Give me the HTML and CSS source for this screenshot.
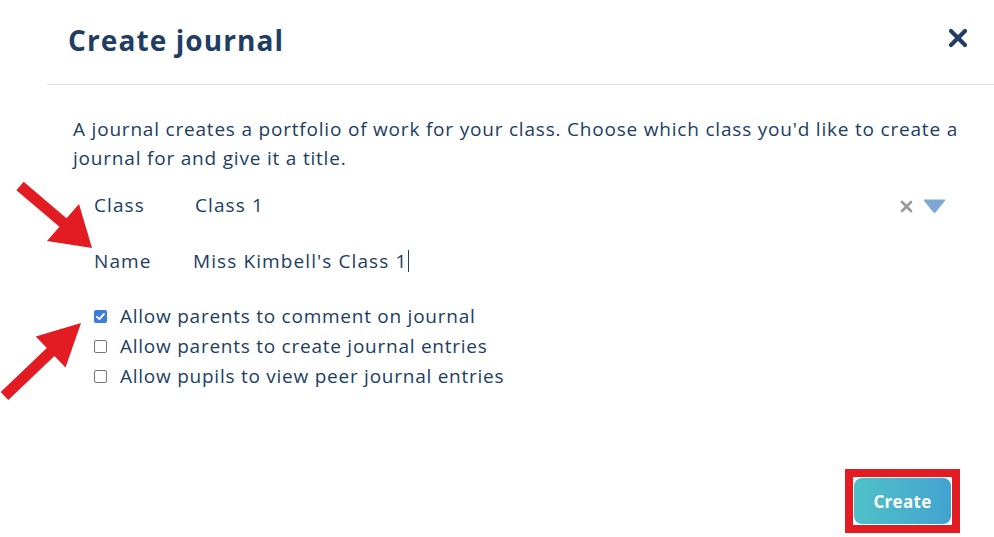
FILE: index.html
```html
<!DOCTYPE html>
<html lang="en">
<head>
    <meta charset="UTF-8">
    <meta name="viewport" content="width=device-width, initial-scale=1.0">
    <title>Create journal</title>
    <link rel="stylesheet" href="styles.css">
</head>
<body>
    <div class="modal">
        <!-- Header -->
        <div class="modal-header">
            <h2>Create journal</h2>
            <svg class="close" width="20" height="20" viewBox="0 0 20 20">
                <path d="M3 3 L17 17 M17 3 L3 17" stroke="#213d63" stroke-width="4.2" stroke-linecap="round"/>
            </svg>
        </div>

        <!-- Body -->
        <div class="modal-body">
            <p class="intro">A journal creates a portfolio of work for your class. Choose which class you'd like to create a journal for and give it a title.</p>

            <div class="form">
                <div class="form-row">
                    <label>Class</label>
                    <div class="select">
                        <span class="select-value">Class 1</span>
                        <span class="select-clear">
                            <svg width="13" height="13" viewBox="0 0 13 13">
                                <path d="M2 2 L11 11 M11 2 L2 11" stroke="#9a9a9a" stroke-width="2.7" stroke-linecap="round"/>
                            </svg>
                        </span>
                        <svg class="select-arrow" width="23" height="14" viewBox="0 0 23 14">
                            <path d="M1 1 L22 1 L12.5 13 Q11.5 14 10.5 13 Z" fill="#7ea7d5" stroke="#7ea7d5" stroke-width="1" stroke-linejoin="round"/>
                        </svg>
                    </div>
                </div>
                <div class="form-row">
                    <label>Name</label>
                    <div class="text-input">Miss Kimbell's Class 1<span class="caret"></span></div>
                </div>
            </div>

            <ul class="options">
                <li><span class="checkbox checked">
                    <svg width="13" height="13" viewBox="0 0 13 13"><path d="M3 6.8 L5.4 9.2 L10 4" fill="none" stroke="#fff" stroke-width="1.9" stroke-linecap="round" stroke-linejoin="round"/></svg>
                </span>Allow parents to comment on journal</li>
                <li><span class="checkbox"></span>Allow parents to create journal entries</li>
                <li><span class="checkbox"></span>Allow pupils to view peer journal entries</li>
            </ul>
        </div>

        <!-- Footer -->
        <div class="modal-footer">
            <span class="highlight"><button class="btn-create">Create</button></span>
        </div>
    </div>

    <!-- Annotation arrows -->
    <svg class="annotations" width="994" height="537" viewBox="0 0 994 537">
        <polygon fill="#e31c23" points="23.6,181.8 66.5,218.3 79,204 92,248 47,241 59.4,226.7 16.4,190.2"/>
        <polygon fill="#e31c23" points="0.7,392 46.8,348 35.7,336.4 81,323 65.5,367.6 54.4,356 8.3,400"/>
    </svg>
</body>
</html>
```

FILE: styles.css
```css
body {
    margin: 0;
    background: #fff;
    font-family: "Open Sans", Arial, sans-serif;
    color: #213d63;
    letter-spacing: 0.85px;
}

/* Modal */
.modal {
    margin-left: 47px;
    width: 947px;
    height: 537px;
}

.modal-header {
    height: 84px;
    border-bottom: 1px solid #e3e5ea;
    display: flex;
    align-items: center;
    justify-content: space-between;
    padding: 0 26px 0 21px;
}

.modal-header h2 {
    margin: 0;
    font-size: 28px;
    font-weight: 700;
    color: #213d63;
    letter-spacing: 1.1px;
    padding-bottom: 4px;
}

.close {
    display: block;
    margin-bottom: 8px;
}

.modal-body {
    padding: 30px 26px 0 26px;
}

.intro {
    margin: 0;
    font-size: 19px;
    line-height: 29px;
    letter-spacing: 0.8px;
}

/* Form rows */
.form {
    margin: 12px 0 0 21px;
}

.form-row {
    display: flex;
    align-items: center;
    height: 40px;
    margin-bottom: 16px;
    font-size: 19px;
    letter-spacing: 1.1px;
}

.form-row label {
    width: 99px;
}

.select {
    flex: 1;
    display: flex;
    align-items: center;
    padding-left: 2px;
    padding-right: 22px;
}

.select-value {
    flex: 1;
}

.select-clear {
    display: flex;
    margin-right: 10px;
    margin-top: 2px;
}

.select-arrow {
    display: block;
    margin-top: 1px;
}

.text-input {
    flex: 1;
    display: flex;
    align-items: center;
}

.caret {
    display: inline-block;
    width: 1px;
    height: 22px;
    background: #213d63;
    margin-left: 1px;
}

/* Checkbox options */
.options {
    list-style: none;
    margin: 20px 0 0 21px;
    padding: 0;
}

.options li {
    display: flex;
    align-items: center;
    height: 30px;
    font-size: 19px;
    letter-spacing: 0.75px;
}

.checkbox {
    width: 11px;
    height: 11px;
    border: 1px solid #767676;
    border-radius: 2px;
    margin-right: 13px;
    display: flex;
}

.checkbox.checked {
    width: 13px;
    height: 13px;
    border: none;
    background: #3b7ddc;
}

/* Footer */
.modal-footer {
    display: flex;
    justify-content: flex-end;
    padding-right: 34px;
    margin-top: 78px;
}

.highlight {
    border: 8px solid #e31c23;
    padding: 1px;
    display: flex;
}

.btn-create {
    width: 97px;
    height: 46px;
    border: none;
    border-radius: 8px;
    background: linear-gradient(to right, #4fc1c8, #43a3d0);
    color: #fff;
    font-family: "Open Sans", Arial, sans-serif;
    font-size: 17px;
    font-weight: 700;
    letter-spacing: 0.3px;
}

/* Annotation overlay */
.annotations {
    position: absolute;
    top: 0;
    left: 0;
    pointer-events: none;
}
```
